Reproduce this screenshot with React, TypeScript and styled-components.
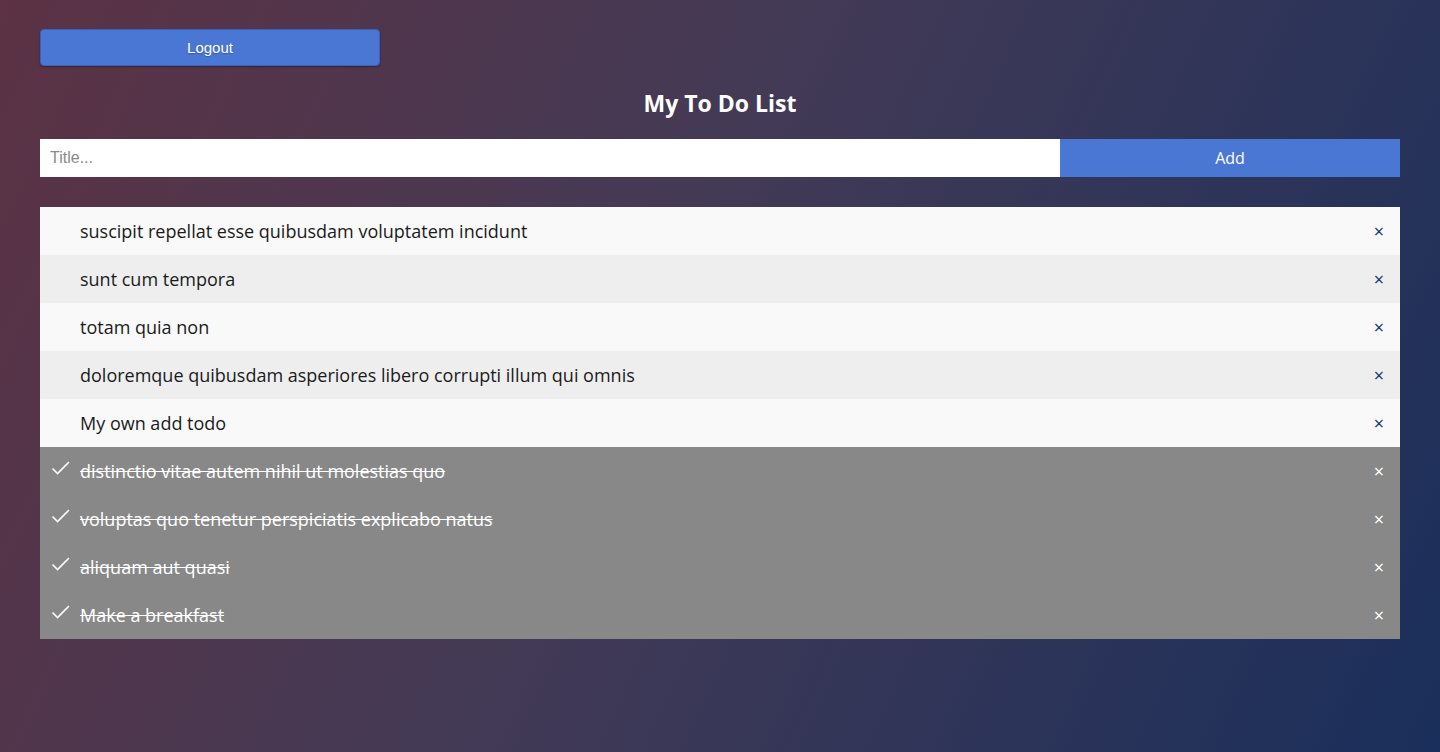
import { useState } from 'react'
import styled, { createGlobalStyle } from 'styled-components'

const GlobalStyle = createGlobalStyle`
  html, body {
    margin: 0;
    padding: 0;
  }
  body {
    min-height: 752px;
    background: linear-gradient(115deg, #5c3244 0%, #433a56 45%, #1a2f5b 100%);
    font-family: 'Open Sans', 'Liberation Sans', sans-serif;
  }
`

type Todo = {
  id: number
  title: string
  completed: boolean
}

const initialTodos: Todo[] = [
  { id: 1, title: 'suscipit repellat esse quibusdam voluptatem incidunt', completed: false },
  { id: 2, title: 'sunt cum tempora', completed: false },
  { id: 3, title: 'totam quia non', completed: false },
  { id: 4, title: 'doloremque quibusdam asperiores libero corrupti illum qui omnis', completed: false },
  { id: 5, title: 'My own add todo', completed: false },
  { id: 6, title: 'distinctio vitae autem nihil ut molestias quo', completed: true },
  { id: 7, title: 'voluptas quo tenetur perspiciatis explicabo natus', completed: true },
  { id: 8, title: 'aliquam aut quasi', completed: true },
  { id: 9, title: 'Make a breakfast', completed: true },
]

const Page = styled.div`
  padding: 29px 40px 40px;
`

const LogoutButton = styled.button`
  display: block;
  width: 25%;
  height: 37px;
  background: #4a77d4;
  color: #fff;
  border: 1px solid #3762bc;
  border-radius: 4px;
  box-shadow: 0 1px 2px rgba(0, 0, 0, 0.35);
  font-family: 'Liberation Sans', Arial, sans-serif;
  font-size: 15px;
  text-shadow: 0 1px 1px rgba(0, 0, 0, 0.25);
  cursor: pointer;
`

const Title = styled.h2`
  margin: 21px 0 20px;
  text-align: center;
  color: #fff;
  font-size: 23px;
  font-weight: 700;
  line-height: 32px;
`

const AddRow = styled.form`
  display: flex;
  height: 38px;
  margin-bottom: 30px;
`

const TitleInput = styled.input`
  flex: 0 0 75%;
  box-sizing: border-box;
  border: none;
  outline: none;
  padding: 0 10px;
  font-family: 'Liberation Sans', Arial, sans-serif;
  font-size: 16px;
  background: #fff;

  &::placeholder {
    color: #8a8a8a;
  }
`

const AddButton = styled.button`
  flex: 1;
  border: none;
  background: #4a77d4;
  color: #fff;
  font-family: 'Open Sans', sans-serif;
  font-size: 16px;
  cursor: pointer;
`

const List = styled.ul`
  list-style: none;
  margin: 0;
  padding: 0;
`

type ItemProps = {
  $done: boolean
  $odd: boolean
}

const Item = styled.li<ItemProps>`
  position: relative;
  display: flex;
  align-items: center;
  height: 48px;
  padding: 0 0 0 40px;
  font-size: 18px;
  color: ${({ $done }) => ($done ? '#fff' : '#1b1b1b')};
  background: ${({ $done, $odd }) => ($done ? '#888' : $odd ? '#f9f9f9' : '#eee')};
  cursor: pointer;
`

const ItemText = styled.span<{ $done: boolean }>`
  flex: 1;
  line-height: 24px;
  text-decoration: ${({ $done }) => ($done ? 'line-through' : 'none')};
`

const Check = styled.svg`
  position: absolute;
  left: 11px;
  top: 13px;
`

const Close = styled.span<{ $done: boolean }>`
  width: 42px;
  text-align: center;
  font-size: 18px;
  line-height: 24px;
  color: ${({ $done }) => ($done ? '#fff' : '#0f3466')};
`

const CheckIcon = () => (
  <Check width="20" height="16" viewBox="0 0 20 16">
    <path d="M1.5 8.5 L6.5 13.5 L18 2" fill="none" stroke="#fff" strokeWidth="1.6" />
  </Check>
)

export default function App() {
  const [todos, setTodos] = useState(initialTodos)
  const [text, setText] = useState('')

  function handleAdd(e: React.FormEvent) {
    e.preventDefault()
    if (!text.trim()) return
    setTodos([...todos, { id: Date.now(), title: text, completed: false }])
    setText('')
  }

  function toggle(id: number) {
    setTodos(todos.map((t) => (t.id === id ? { ...t, completed: !t.completed } : t)))
  }

  function remove(id: number) {
    setTodos(todos.filter((t) => t.id !== id))
  }

  return (
    <Page>
      <GlobalStyle />
      <LogoutButton>Logout</LogoutButton>
      <Title>My To Do List</Title>
      <AddRow onSubmit={handleAdd}>
        <TitleInput
          placeholder="Title..."
          value={text}
          onChange={(e) => setText(e.target.value)}
        />
        <AddButton type="submit">Add</AddButton>
      </AddRow>
      <List>
        {todos.map((todo, i) => (
          <Item
            key={todo.id}
            $done={todo.completed}
            $odd={i % 2 === 0}
            onClick={() => toggle(todo.id)}
          >
            {todo.completed && <CheckIcon />}
            <ItemText $done={todo.completed}>{todo.title}</ItemText>
            <Close
              $done={todo.completed}
              onClick={(e) => {
                e.stopPropagation()
                remove(todo.id)
              }}
            >
              ×
            </Close>
          </Item>
        ))}
      </List>
    </Page>
  )
}
